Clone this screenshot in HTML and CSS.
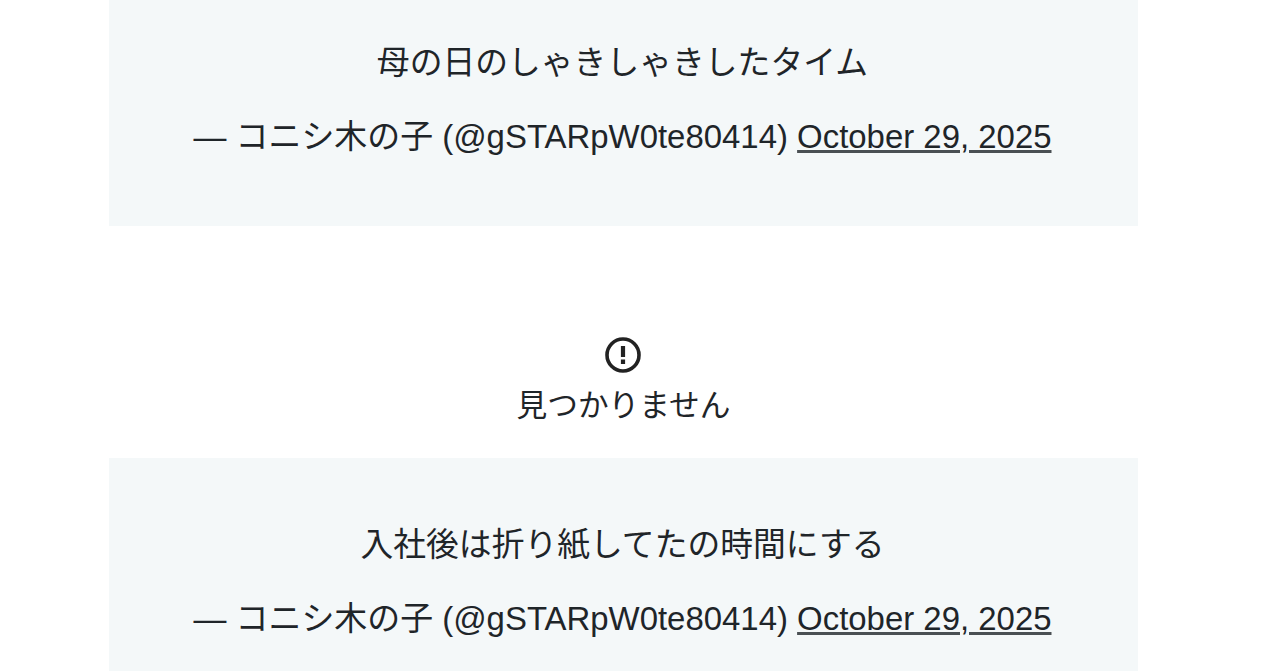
FILE: index.html
```html
<!DOCTYPE html>
<html lang="ja">
<head>
    <meta charset="UTF-8">
    <meta name="viewport" content="width=device-width, initial-scale=1.0">
    <title>見つかりません</title>
    <link rel="stylesheet" href="styles.css">
</head>
<body>

<main>
    <blockquote class="tweet first">
        <p class="tweet-text">母の日のしゃきしゃきしたタイム</p>
        <p class="tweet-author">— コニシ木の子 (@gSTARpW0te80414) <a href="#">October 29, 2025</a></p>
    </blockquote>

    <div class="not-found">
        <svg class="icon" viewBox="0 0 36 36">
            <circle cx="18" cy="18" r="16" fill="none" stroke="#222" stroke-width="3.6"/>
            <path d="M18 9v11M18 22.5v4.5" stroke="#222" stroke-width="4.2"/>
        </svg>
        <p class="message">見つかりません</p>
    </div>

    <blockquote class="tweet last">
        <p class="tweet-text">入社後は折り紙してたの時間にする</p>
        <p class="tweet-author">— コニシ木の子 (@gSTARpW0te80414) <a href="#">October 29, 2025</a></p>
    </blockquote>
</main>

</body>
</html>
```
FILE: styles.css
```css
body {
    margin: 0;
    background: #fff;
    color: #1f2529;
    font-family: "Liberation Sans", "Noto Sans CJK JP", sans-serif;
}
main {
    width: 1029px;
    margin-left: 109px;
    text-align: center;
}
.tweet {
    box-sizing: border-box;
    margin: 0;
    padding-right: 2px;
    background: #f4f8f9;
}
.first {
    height: 226px;
    padding-top: 38px;
}
.last {
    height: 213px;
    padding-top: 62px;
}
.tweet p {
    margin: 0;
    height: 50px;
    line-height: 50px;
    font-size: 32.8px;
    white-space: nowrap;
}
.tweet .tweet-author {
    margin-top: 24px;
    font-size: 32.93px;
}
.tweet a {
    color: inherit;
    text-decoration: underline;
    text-decoration-color: #4a5054;
}
.not-found {
    box-sizing: border-box;
    height: 232px;
    padding-top: 111px;
}
.icon {
    display: block;
    width: 36px;
    height: 36px;
    margin: 0 auto;
    padding-right: 1px;
}
.message {
    margin: 8px 0 0;
    font-size: 30.7px;
    line-height: 50px;
}
```
